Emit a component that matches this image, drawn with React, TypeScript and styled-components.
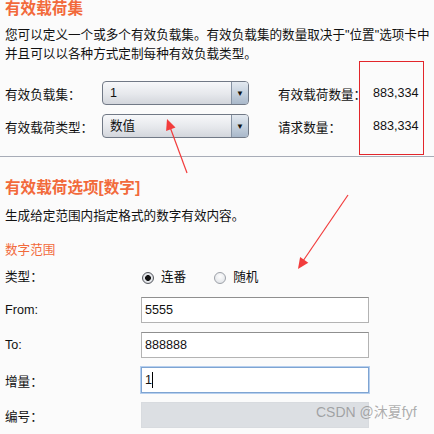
import React from "react";
import styled, { createGlobalStyle } from "styled-components";

const GlobalStyle = createGlobalStyle`
    html, body {
        margin: 0;
        padding: 0;
        background: #fbfbfb;
        overflow: hidden;
    }
    body {
        font-family: "Liberation Sans", "Noto Sans CJK SC", sans-serif;
        font-size: 12.6px;
        color: #111;
    }
`;

const Page = styled.div`
    position: relative;
    width: 434px;
    height: 434px;
    overflow: hidden;
`;

const Section = styled.div<{ $top: number }>`
    padding: ${(p) => p.$top}px 0 0 5px;
`;

const Title = styled.h2`
    margin: 0;
    font-size: 15.6px;
    line-height: 17px;
    font-weight: bold;
    color: #f26a3b;
    white-space: nowrap;
`;

const Text = styled.p<{ $gap: number }>`
    margin: ${(p) => p.$gap}px 0 0;
    line-height: 19px;
    white-space: nowrap;
`;

const SubTitle = styled.div`
    margin-top: 15px;
    line-height: 19px;
    color: #f26a3b;
`;

const SetGrid = styled.div`
    display: grid;
    grid-template-columns: 97px 147px 29px 95px auto;
    grid-auto-rows: 24px;
    row-gap: 9px;
    align-items: center;
    margin-top: 17px;
`;

const Select = styled.div`
    display: flex;
    height: 24px;
    box-sizing: border-box;
    border: 1px solid #717986;
    border-radius: 4px;
    overflow: hidden;
    background: linear-gradient(#f7f8fa, #e6e8ec 55%, #d3d6dc);
`;

const SelectValue = styled.span`
    flex: 1;
    padding-left: 7px;
    line-height: 22px;
`;

const SelectButton = styled.span`
    width: 16px;
    border-left: 1px solid #8592a3;
    background: linear-gradient(#e3e9f0, #c3cfdc 55%, #a9b8ca);
    display: flex;
    align-items: center;
    justify-content: center;
    font-size: 8px;
    color: #111;
`;

const Num = styled.span`
    justify-self: start;
`;

const Divider = styled.hr`
    margin: 18px 0 0;
    border: 0;
    border-top: 1px solid #a7acb7;
`;

const TypeRow = styled.div`
    display: grid;
    grid-template-columns: 137px auto;
    margin-top: 8px;
    line-height: 19px;
    align-items: center;
`;

const RadioGroup = styled.div`
    display: flex;
    align-items: center;
`;

const RadioItem = styled.label`
    display: flex;
    align-items: center;
    gap: 7px;
    margin-right: 28px;
`;

const RadioDot = styled.span<{ $checked?: boolean }>`
    width: 12px;
    height: 12px;
    box-sizing: border-box;
    border-radius: 50%;
    border: 1px solid ${(p) => (p.$checked ? "#55585e" : "#9da1a8")};
    background: ${(p) =>
        p.$checked
            ? "radial-gradient(circle, #111 0 2.6px, #e9ebee 3.2px, #c9ccd2 100%)"
            : "radial-gradient(circle at 50% 35%, #fdfdfd, #dcdfe4)"};
`;

const FormGrid = styled.div`
    display: grid;
    grid-template-columns: 136px 228px;
    grid-auto-rows: 26px;
    row-gap: 9px;
    align-items: center;
    margin-top: 10px;
`;

const FieldWrap = styled.div`
    position: relative;
    display: flex;
`;

const Field = styled.input<{ $focused?: boolean }>`
    width: 100%;
    height: 26px;
    box-sizing: border-box;
    margin: 0;
    padding: 0 3px;
    font: inherit;
    color: #111;
    background: ${(p) => (p.disabled ? "#dcdfe3" : "#fff")};
    border: 1px solid
        ${(p) => (p.disabled ? "#d8dbdf" : p.$focused ? "#7ea4d2" : "#b3b3b3")};
    border-top-color: ${(p) =>
        p.disabled ? "#d8dbdf" : p.$focused ? "#7ea4d2" : "#8f8f8f"};
    box-shadow: ${(p) => (p.$focused ? "0 0 0 1px #b6cfee" : "none")};
    outline: none;
    caret-color: transparent;
`;

const Caret = styled.span`
    position: absolute;
    left: 11px;
    top: 5px;
    width: 1px;
    height: 16px;
    background: #000;
`;

const Box = styled.div`
    position: absolute;
    left: 359px;
    top: 61px;
    width: 65px;
    height: 94px;
    box-sizing: border-box;
    border: 1px solid #e3262b;
`;

const Marks = styled.svg`
    position: absolute;
    left: 0;
    top: 0;
    pointer-events: none;
`;

const Watermark = styled.div`
    position: absolute;
    left: 316px;
    top: 403px;
    font-size: 14px;
    line-height: 18px;
    color: rgba(120, 120, 120, 0.6);
    white-space: nowrap;
`;

const App = () => {
    return (
        <Page>
            <GlobalStyle />
            <Section $top={0}>
                <Title>有效载荷集</Title>
                <Text $gap={9}>
                    您可以定义一个或多个有效负载集。有效负载集的数量取决于"位置"选项卡中
                    <br />
                    并且可以以各种方式定制每种有效负载类型。
                </Text>
                <SetGrid>
                    <span>有效负载集：</span>
                    <Select>
                        <SelectValue>1</SelectValue>
                        <SelectButton>▼</SelectButton>
                    </Select>
                    <span />
                    <span>有效载荷数量：</span>
                    <Num>883,334</Num>
                    <span>有效载荷类型：</span>
                    <Select>
                        <SelectValue>数值</SelectValue>
                        <SelectButton>▼</SelectButton>
                    </Select>
                    <span />
                    <span>请求数量：</span>
                    <Num>883,334</Num>
                </SetGrid>
            </Section>
            <Divider />
            <Section $top={22}>
                <Title>有效载荷选项[数字]</Title>
                <Text $gap={11}>生成给定范围内指定格式的数字有效内容。</Text>
                <SubTitle>数字范围</SubTitle>
                <TypeRow>
                    <span>类型：</span>
                    <RadioGroup>
                        <RadioItem>
                            <RadioDot $checked />
                            连番
                        </RadioItem>
                        <RadioItem>
                            <RadioDot />
                            随机
                        </RadioItem>
                    </RadioGroup>
                </TypeRow>
                <FormGrid>
                    <span>From:</span>
                    <Field defaultValue="5555" />
                    <span>To:</span>
                    <Field defaultValue="888888" />
                    <span>增量：</span>
                    <FieldWrap>
                        <Field defaultValue="1" $focused />
                        <Caret />
                    </FieldWrap>
                    <span>编号：</span>
                    <Field disabled />
                </FormGrid>
            </Section>
            <Box />
            <Marks width={434} height={434}>
                <line x1={187} y1={173} x2={170} y2={127} stroke="#f23c3c" strokeWidth={1.2} />
                <polygon points="167,119 175.5,127.6 166.1,131" fill="#f23c3c" />
                <line x1={348} y1={195} x2={303} y2={261} stroke="#f23c3c" strokeWidth={1.2} />
                <polygon points="298,269 308.3,262.7 300.1,257.1" fill="#f23c3c" />
            </Marks>
            <Watermark>CSDN @沐夏fyf</Watermark>
        </Page>
    );
};

export default App;
